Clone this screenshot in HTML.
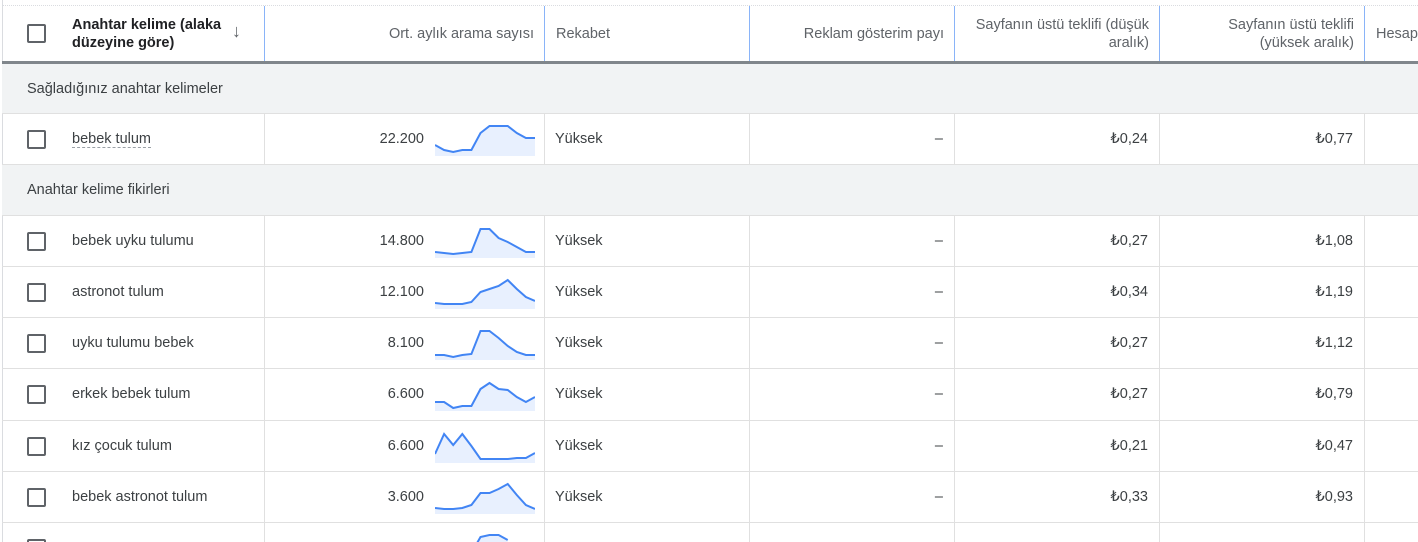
<!DOCTYPE html>
<html><head><meta charset="utf-8"><style>
*{margin:0;padding:0;box-sizing:border-box}
html,body{width:1418px;height:542px;overflow:hidden}
body{background:#fff;font-family:"Liberation Sans",Arial,sans-serif;font-size:14.5px;color:#3c4043;position:relative}
.abs{position:absolute}
.hdr{position:absolute;top:5px;left:2px;width:1416px;height:56px;border-top:1px dotted #dadce0}
.hb{position:absolute;top:61px;left:2px;width:1416px;height:3px;background:#80868b}
.hc{position:absolute;top:0;height:56px;border-right:1px solid #8ab4f8;display:flex;align-items:center;justify-content:flex-end;text-align:right;padding-right:10px;color:#5f6368;line-height:18px}
.grp{position:absolute;left:2px;width:1416px;background:#f1f3f4;border-bottom:1px solid #e0e0e0;padding-left:25px;display:flex;align-items:center;color:#3c4043}
.row{position:absolute;left:2px;width:1416px;height:51px;border-bottom:1px solid #e0e0e0;overflow:hidden}
.c{position:absolute;top:0;height:51px;border-right:1px solid #e0e0e0;display:flex;align-items:center}
.cb{position:absolute;left:25px;width:19px;height:19px;border:2px solid #5f6368;border-radius:2px;top:16px}
.kw{position:absolute;left:70px;top:17px}
.num{position:absolute;right:120px;top:17px}
.sp{position:absolute;left:170px;top:10px}
.r{position:absolute;right:11px;top:17px}
.l{position:absolute;left:10px;top:17px}
.lb{position:absolute;left:0;top:0;width:1px;height:542px;background:#dadce0}
</style></head><body>
<div class="lb" style="left:2px"></div>
<div class="hdr">
 <div class="hc" style="left:0;width:263px;justify-content:flex-start;text-align:left;padding:0">
  <div class="cb" style="top:18px"></div>
  <div class="abs" style="left:70px;top:10px;color:#202124;font-weight:bold;line-height:18px">Anahtar kelime (alaka<br>düzeyine göre)</div>
  <div class="abs" style="left:230px;top:16px;color:#5f6368;font-size:18px">↓</div>
 </div>
 <div class="hc" style="left:263px;width:280px">Ort. aylık arama sayısı</div>
 <div class="hc" style="left:543px;width:205px;justify-content:flex-start;padding-left:11px">Rekabet</div>
 <div class="hc" style="left:748px;width:205px">Reklam gösterim payı</div>
 <div class="hc" style="left:953px;width:205px">Sayfanın üstü teklifi (düşük<br>aralık)</div>
 <div class="hc" style="left:1158px;width:205px">Sayfanın üstü teklifi<br>(yüksek aralık)</div>
 <div class="hc" style="left:1363px;width:60px;justify-content:flex-start;padding-left:11px;border:none">Hesap</div>
</div>
<div class="hb"></div>
<div class="grp" style="top:64px;height:50px">Sağladığınız anahtar kelimeler</div>

<div class="row" style="top:114px;height:51px">
 <div class="c" style="left:0;width:263px"><div class="cb"></div><div class="kw" style="border-bottom:1px dashed #9aa0a6;line-height:16px">bebek tulum</div></div>
 <div class="c" style="left:263px;width:280px"><div class="num">22.200</div><svg class="sp" width="100" height="32" viewBox="0 0 100 32"><polygon fill="#e8f0fe" points="0,32 0,21 9.1,26 18.2,28 27.3,26 36.4,26 45.5,9 54.5,2 63.6,2 72.7,2 81.8,9 90.9,14 100,14 100,32"/><polyline fill="none" stroke="#4285f4" stroke-width="2" points="0,21 9.1,26 18.2,28 27.3,26 36.4,26 45.5,9 54.5,2 63.6,2 72.7,2 81.8,9 90.9,14 100,14"/></svg></div>
 <div class="c" style="left:543px;width:205px"><div class="l">Yüksek</div></div>
 <div class="c" style="left:748px;width:205px"><div class="r">–</div></div>
 <div class="c" style="left:953px;width:205px"><div class="r">₺0,24</div></div>
 <div class="c" style="left:1158px;width:205px"><div class="r">₺0,77</div></div>
</div>
<div class="grp" style="top:165px;height:51px">Anahtar kelime fikirleri</div>

<div class="row" style="top:216px">
 <div class="c" style="left:0;width:263px"><div class="cb"></div><div class="kw">bebek uyku tulumu</div></div>
 <div class="c" style="left:263px;width:280px"><div class="num">14.800</div><svg class="sp" width="100" height="32" viewBox="0 0 100 32"><polygon fill="#e8f0fe" points="0,32 0,26 9.1,27 18.2,28 27.3,27 36.4,26 45.5,3 54.5,3 63.6,12 72.7,16 81.8,21 90.9,26 100,26 100,32"/><polyline fill="none" stroke="#4285f4" stroke-width="2" points="0,26 9.1,27 18.2,28 27.3,27 36.4,26 45.5,3 54.5,3 63.6,12 72.7,16 81.8,21 90.9,26 100,26"/></svg></div>
 <div class="c" style="left:543px;width:205px"><div class="l">Yüksek</div></div>
 <div class="c" style="left:748px;width:205px"><div class="r">–</div></div>
 <div class="c" style="left:953px;width:205px"><div class="r">₺0,27</div></div>
 <div class="c" style="left:1158px;width:205px"><div class="r">₺1,08</div></div>
</div>

<div class="row" style="top:267px">
 <div class="c" style="left:0;width:263px"><div class="cb"></div><div class="kw">astronot tulum</div></div>
 <div class="c" style="left:263px;width:280px"><div class="num">12.100</div><svg class="sp" width="100" height="32" viewBox="0 0 100 32"><polygon fill="#e8f0fe" points="0,32 0,26 9.1,27 18.2,27 27.3,27 36.4,25 45.5,15 54.5,12 63.6,9 72.7,3 81.8,12 90.9,20 100,24 100,32"/><polyline fill="none" stroke="#4285f4" stroke-width="2" points="0,26 9.1,27 18.2,27 27.3,27 36.4,25 45.5,15 54.5,12 63.6,9 72.7,3 81.8,12 90.9,20 100,24"/></svg></div>
 <div class="c" style="left:543px;width:205px"><div class="l">Yüksek</div></div>
 <div class="c" style="left:748px;width:205px"><div class="r">–</div></div>
 <div class="c" style="left:953px;width:205px"><div class="r">₺0,34</div></div>
 <div class="c" style="left:1158px;width:205px"><div class="r">₺1,19</div></div>
</div>

<div class="row" style="top:318px">
 <div class="c" style="left:0;width:263px"><div class="cb"></div><div class="kw">uyku tulumu bebek</div></div>
 <div class="c" style="left:263px;width:280px"><div class="num">8.100</div><svg class="sp" width="100" height="32" viewBox="0 0 100 32"><polygon fill="#e8f0fe" points="0,32 0,27 9.1,27 18.2,29 27.3,27 36.4,26 45.5,3 54.5,3 63.6,10 72.7,18 81.8,24 90.9,27 100,27 100,32"/><polyline fill="none" stroke="#4285f4" stroke-width="2" points="0,27 9.1,27 18.2,29 27.3,27 36.4,26 45.5,3 54.5,3 63.6,10 72.7,18 81.8,24 90.9,27 100,27"/></svg></div>
 <div class="c" style="left:543px;width:205px"><div class="l">Yüksek</div></div>
 <div class="c" style="left:748px;width:205px"><div class="r">–</div></div>
 <div class="c" style="left:953px;width:205px"><div class="r">₺0,27</div></div>
 <div class="c" style="left:1158px;width:205px"><div class="r">₺1,12</div></div>
</div>

<div class="row" style="top:369px;height:52px">
 <div class="c" style="left:0;width:263px"><div class="cb"></div><div class="kw">erkek bebek tulum</div></div>
 <div class="c" style="left:263px;width:280px"><div class="num">6.600</div><svg class="sp" width="100" height="32" viewBox="0 0 100 32"><polygon fill="#e8f0fe" points="0,32 0,23 9.1,23 18.2,29 27.3,27 36.4,27 45.5,10 54.5,4 63.6,10 72.7,11 81.8,18 90.9,23 100,18 100,32"/><polyline fill="none" stroke="#4285f4" stroke-width="2" points="0,23 9.1,23 18.2,29 27.3,27 36.4,27 45.5,10 54.5,4 63.6,10 72.7,11 81.8,18 90.9,23 100,18"/></svg></div>
 <div class="c" style="left:543px;width:205px"><div class="l">Yüksek</div></div>
 <div class="c" style="left:748px;width:205px"><div class="r">–</div></div>
 <div class="c" style="left:953px;width:205px"><div class="r">₺0,27</div></div>
 <div class="c" style="left:1158px;width:205px"><div class="r">₺0,79</div></div>
</div>

<div class="row" style="top:421px">
 <div class="c" style="left:0;width:263px"><div class="cb"></div><div class="kw">kız çocuk tulum</div></div>
 <div class="c" style="left:263px;width:280px"><div class="num">6.600</div><svg class="sp" width="100" height="32" viewBox="0 0 100 32"><polygon fill="#e8f0fe" points="0,32 0,23 9.1,3 18.2,14 27.3,3 36.4,15 45.5,28 54.5,28 63.6,28 72.7,28 81.8,27 90.9,27 100,22 100,32"/><polyline fill="none" stroke="#4285f4" stroke-width="2" points="0,23 9.1,3 18.2,14 27.3,3 36.4,15 45.5,28 54.5,28 63.6,28 72.7,28 81.8,27 90.9,27 100,22"/></svg></div>
 <div class="c" style="left:543px;width:205px"><div class="l">Yüksek</div></div>
 <div class="c" style="left:748px;width:205px"><div class="r">–</div></div>
 <div class="c" style="left:953px;width:205px"><div class="r">₺0,21</div></div>
 <div class="c" style="left:1158px;width:205px"><div class="r">₺0,47</div></div>
</div>

<div class="row" style="top:472px">
 <div class="c" style="left:0;width:263px"><div class="cb"></div><div class="kw">bebek astronot tulum</div></div>
 <div class="c" style="left:263px;width:280px"><div class="num">3.600</div><svg class="sp" width="100" height="32" viewBox="0 0 100 32"><polygon fill="#e8f0fe" points="0,32 0,26 9.1,27 18.2,27 27.3,26 36.4,23 45.5,11 54.5,11 63.6,7 72.7,2 81.8,13 90.9,23 100,27 100,32"/><polyline fill="none" stroke="#4285f4" stroke-width="2" points="0,26 9.1,27 18.2,27 27.3,26 36.4,23 45.5,11 54.5,11 63.6,7 72.7,2 81.8,13 90.9,23 100,27"/></svg></div>
 <div class="c" style="left:543px;width:205px"><div class="l">Yüksek</div></div>
 <div class="c" style="left:748px;width:205px"><div class="r">–</div></div>
 <div class="c" style="left:953px;width:205px"><div class="r">₺0,33</div></div>
 <div class="c" style="left:1158px;width:205px"><div class="r">₺0,93</div></div>
</div>

<div class="row" style="top:523px;height:19px;border:none">
 <div class="c" style="left:0;width:263px"><div class="cb"></div></div>
 <div class="c" style="left:263px;width:280px"><svg class="sp" width="100" height="32" viewBox="0 0 100 32"><polygon fill="#e8f0fe" points="36.4,32 45.5,4 54.5,2 63.6,2 72.7,7 72.7,32"/><polyline fill="none" stroke="#4285f4" stroke-width="2" points="36.4,20 45.5,4 54.5,2 63.6,2 72.7,7"/></svg></div>
 <div class="c" style="left:543px;width:205px"></div>
 <div class="c" style="left:748px;width:205px"></div>
 <div class="c" style="left:953px;width:205px"></div>
 <div class="c" style="left:1158px;width:205px"></div>
</div>
</body></html>
